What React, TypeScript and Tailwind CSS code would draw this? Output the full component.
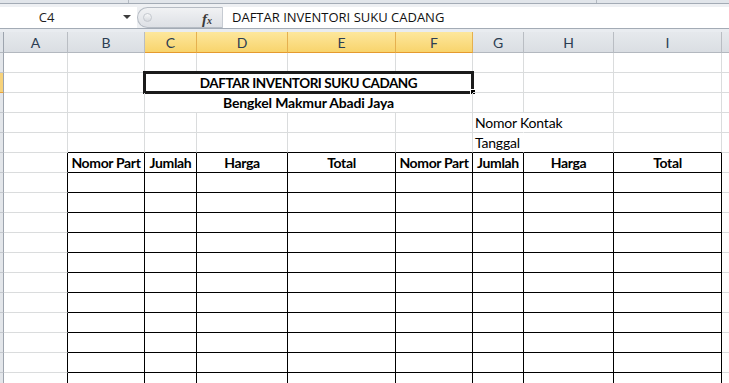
import React from 'react';

type Edge = 'grid' | 'black' | 'none';

const cols = [
  { key: 'A', w: 'w-[64px]' },
  { key: 'B', w: 'w-[77px]' },
  { key: 'C', w: 'w-[52px]' },
  { key: 'D', w: 'w-[91px]' },
  { key: 'E', w: 'w-[108px]' },
  { key: 'F', w: 'w-[77px]' },
  { key: 'G', w: 'w-[51px]' },
  { key: 'H', w: 'w-[90px]' },
  { key: 'I', w: 'w-[108px]' },
];

const selectedCols = ['C', 'D', 'E', 'F'];
const headers = ['Nomor Part', 'Jumlah', 'Harga', 'Total', 'Nomor Part', 'Jumlah', 'Harga', 'Total'];

const rightCls: Record<Edge, string> = {
  grid: 'border-r-[#dadcdd]',
  black: 'border-r-black',
  none: 'border-r-white',
};
const bottomCls: Record<Edge, string> = {
  grid: 'border-b-[#dadcdd]',
  black: 'border-b-black',
  none: 'border-b-white',
};

function Cell({
  w,
  right = 'grid',
  bottom = 'grid',
  children,
  className = '',
}: {
  w: string;
  right?: Edge;
  bottom?: Edge;
  children?: React.ReactNode;
  className?: string;
}) {
  return (
    <div
      className={`relative h-full shrink-0 border-r border-b ${w} ${rightCls[right]} ${bottomCls[bottom]} ${className}`}
    >
      {children}
    </div>
  );
}

function RowHead({ active = false }: { active?: boolean }) {
  return (
    <div
      className={`h-full w-[4px] shrink-0 border-r border-b border-r-[#9da4ae] ${
        active ? 'bg-[#f7d27a] border-b-[#e8a23c]' : 'bg-[#e3e6ea] border-b-[#c3c7cd]'
      }`}
    />
  );
}

function Tail() {
  return <div className="h-full flex-1 border-b border-b-[#dadcdd]" />;
}

// which edges of a plain cell get the table border
function edges(row: number, col: number): { right: Edge; bottom: Edge } {
  const inTableRows = row >= 5;
  const right: Edge = inTableRows && col <= 8 ? 'black' : 'grid';
  const bottom: Edge = row >= 4 && col >= 1 ? 'black' : 'grid';
  return { right, bottom };
}

function PlainRow({ row }: { row: number }) {
  return (
    <div className="flex h-[20px]">
      <RowHead />
      {cols.map((c, i) => {
        const e = edges(row, i);
        return <Cell key={c.key} w={c.w} right={e.right} bottom={e.bottom} />;
      })}
      <Tail />
    </div>
  );
}

function TitleRow() {
  return (
    <div className="flex h-[20px]">
      <RowHead active />
      <Cell w={cols[0].w} />
      <Cell w={cols[1].w} />
      <Cell w="w-[328px]" right="black" bottom="black">
        <div className="flex h-full items-end justify-center pb-[2px] text-[13.5px] font-bold leading-none tracking-[-0.45px]">
          DAFTAR INVENTORI SUKU CADANG
        </div>
        {/* selection frame + fill handle */}
        <div className="absolute left-[-2px] top-[-2px] h-[23px] w-[331px] border-[3px] border-[#1b1b1b]" />
        <div className="absolute left-[325px] top-[16px] h-[6px] w-[6px] border border-white bg-black" />
      </Cell>
      <Cell w={cols[6].w} />
      <Cell w={cols[7].w} />
      <Cell w={cols[8].w} />
      <Tail />
    </div>
  );
}

function SubtitleRow() {
  return (
    <div className="flex h-[20px]">
      <RowHead />
      <Cell w={cols[0].w} />
      <Cell w={cols[1].w} />
      <Cell w="w-[328px]">
        <div className="flex h-full items-end justify-center pb-[2px] font-bold leading-none tracking-[-0.15px]">
          Bengkel Makmur Abadi Jaya
        </div>
      </Cell>
      <Cell w={cols[6].w} />
      <Cell w={cols[7].w} />
      <Cell w={cols[8].w} />
      <Tail />
    </div>
  );
}

function LabelRow({ row, label }: { row: number; label: string }) {
  return (
    <div className="flex h-[20px]">
      <RowHead />
      {cols.map((c, i) => {
        const e = edges(row, i);
        if (c.key === 'G') {
          return (
            <Cell key={c.key} w={c.w} right="none" bottom={e.bottom}>
              <div className="absolute bottom-[2px] left-[2px] whitespace-nowrap leading-none tracking-[-0.2px]">
                {label}
              </div>
            </Cell>
          );
        }
        return <Cell key={c.key} w={c.w} right={e.right} bottom={e.bottom} />;
      })}
      <Tail />
    </div>
  );
}

function HeaderRow() {
  return (
    <div className="flex h-[20px]">
      <RowHead />
      {cols.map((c, i) => {
        const e = edges(5, i);
        return (
          <Cell key={c.key} w={c.w} right={e.right} bottom={e.bottom}>
            {i > 0 && (
              <div className="flex h-full items-end justify-center pb-[2px] font-bold leading-none whitespace-nowrap tracking-[-0.35px]">
                {headers[i - 1]}
              </div>
            )}
          </Cell>
        );
      })}
      <Tail />
    </div>
  );
}

export default function App() {
  return (
    <div className="h-[383px] w-[729px] overflow-hidden bg-white text-black">
      {/* ribbon edge */}
      <div className="relative h-[3px] bg-[#e1e5ea]">
        <div className="absolute left-[128px] top-0 h-full w-px bg-[#b3b9c1]" />
        <div className="absolute left-[596px] top-0 h-full w-px bg-[#b3b9c1]" />
      </div>
      <div className="h-px bg-[#a3abb5]" />

      {/* formula bar */}
      <div className="flex h-[24px] bg-[#eef0f3] pt-[3px]">
        <div className="relative flex w-[137px] shrink-0 items-center bg-white">
          <span className="w-full pr-[44px] text-center font-['Open_Sans',sans-serif] text-[13px] text-[#1e1e1e]">
            C4
          </span>
          <div className="absolute left-[123px] top-[8px] h-0 w-0 border-x-[4px] border-t-[4px] border-x-transparent border-t-[#3c3c3c]" />
        </div>
        <div className="relative flex w-[85px] shrink-0 items-center rounded-l-full border border-r-0 border-[#b6bcc4] bg-gradient-to-b from-[#f1f2f4] to-[#dde0e5]">
          <div className="ml-[5px] h-[9px] w-[9px] rounded-full border border-[#c4c8ce] bg-gradient-to-b from-[#f7f8f9] to-[#d6d9de]" />
          <span className="absolute left-[64px] top-0 font-['Liberation_Serif',serif] text-[15px] font-bold italic text-[#3a3a3a]">
            f<span className="text-[10px]">x</span>
          </span>
        </div>
        <div className="flex flex-1 items-center border-l border-[#c6cbd2] bg-white pl-[9px] font-['Open_Sans',sans-serif] text-[13px] text-[#111]">
          DAFTAR INVENTORI SUKU CADANG
        </div>
      </div>
      <div className="h-px bg-[#a3abb5]" />
      <div className="h-[3px] bg-[#e9ecf0]" />

      {/* column headers */}
      <div className="flex h-[21px] font-['Lato',sans-serif] text-[14px] text-[#2c3d52]">
        <div className="h-full w-[4px] shrink-0 border-r border-b border-r-[#9da4ae] border-b-[#b3b8bf] bg-[#dfe3e8]" />
        {cols.map((c) =>
          selectedCols.includes(c.key) ? (
            <div
              key={c.key}
              className={`flex h-full shrink-0 items-center justify-center border-r border-b border-r-[#e5b04f] border-b-[#e59a2e] bg-gradient-to-b from-[#fde79c] to-[#f8d46c] ${c.w}`}
            >
              {c.key}
            </div>
          ) : (
            <div
              key={c.key}
              className={`flex h-full shrink-0 items-center justify-center border-r border-b border-r-[#b9bdc3] border-b-[#b3b8bf] bg-gradient-to-b from-[#e6e9ed] to-[#dadee3] ${c.w}`}
            >
              {c.key}
            </div>
          ),
        )}
        <div className="h-full flex-1 border-b border-b-[#b3b8bf] bg-gradient-to-b from-[#e6e9ed] to-[#dadee3]" />
      </div>

      {/* sheet */}
      <div className="font-['Lato',sans-serif] text-[14px]">
        <PlainRow row={0} />
        <TitleRow />
        <SubtitleRow />
        <LabelRow row={3} label="Nomor Kontak" />
        <LabelRow row={4} label="Tanggal" />
        <HeaderRow />
        {Array.from({ length: 11 }, (_, i) => (
          <PlainRow key={i} row={6 + i} />
        ))}
      </div>
    </div>
  );
}
